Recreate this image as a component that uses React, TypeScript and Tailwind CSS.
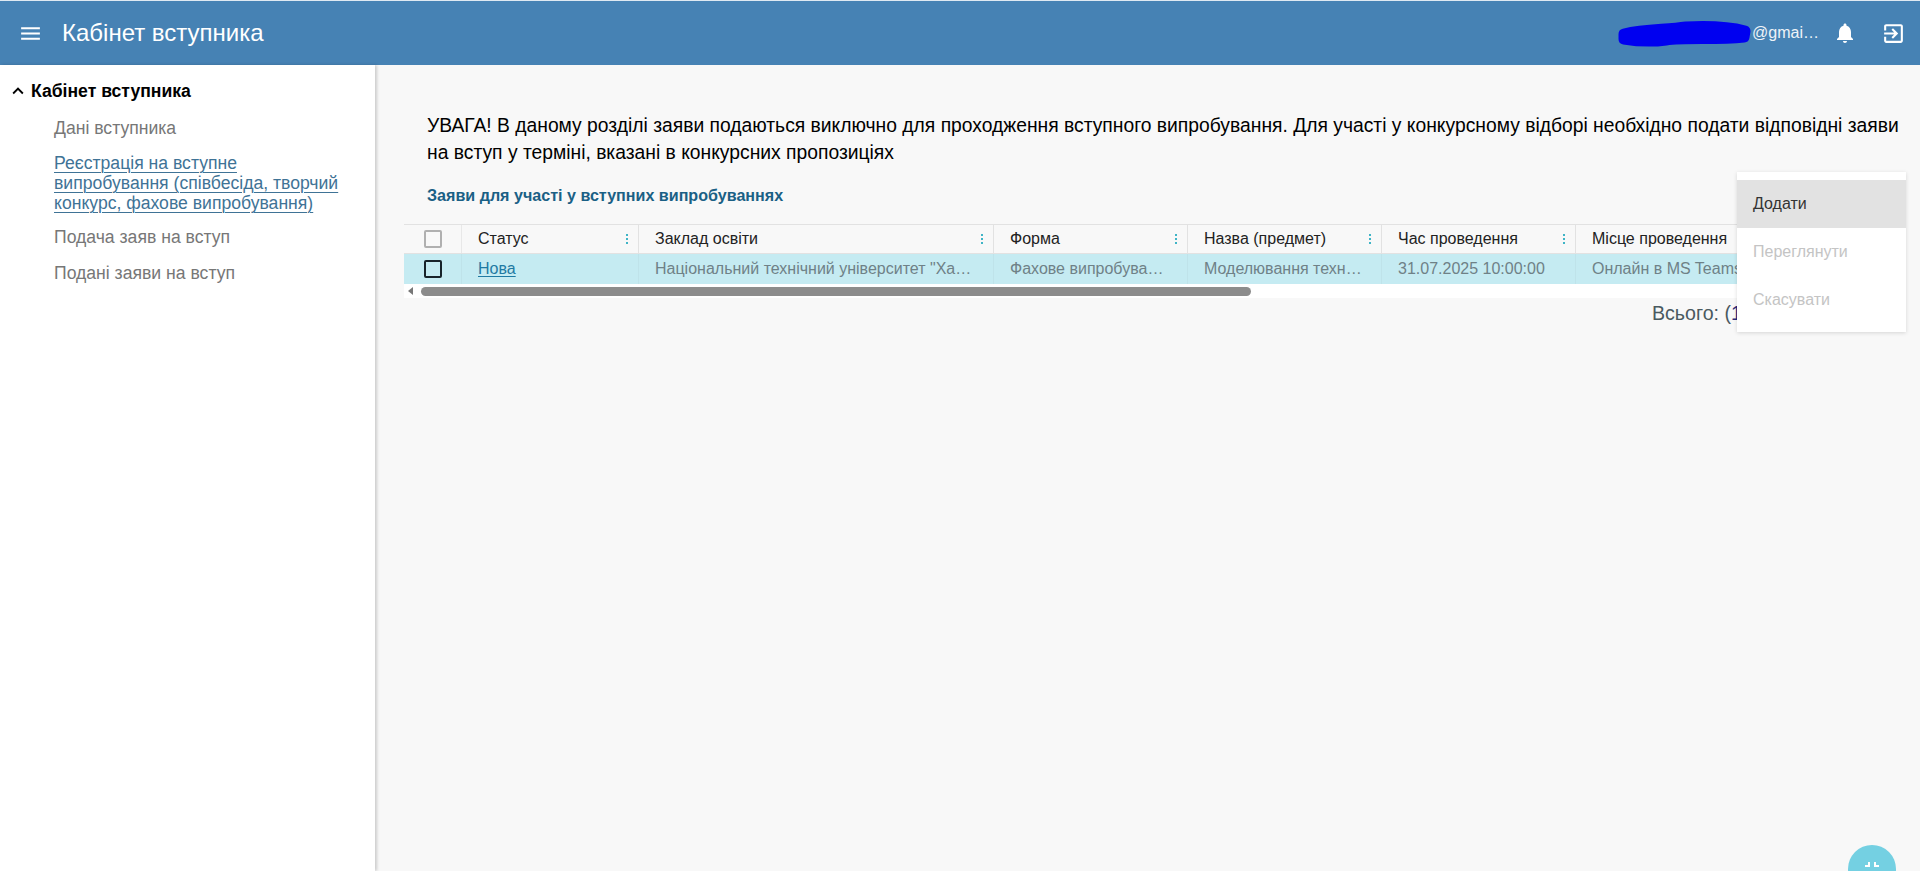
type Column = {
  title: string;
  value: string;
  width: string;
};

const columns: Column[] = [
  { title: "Заклад освіти", value: 'Національний технічний університет "Харківський політехнічний інститут"', width: "w-[355px]" },
  { title: "Форма", value: "Фахове випробування", width: "w-[194px]" },
  { title: "Назва (предмет)", value: "Моделювання технологічних процесів", width: "w-[194px]" },
  { title: "Час проведення", value: "31.07.2025 10:00:00", width: "w-[194px]" },
];

function ColumnMenuDots() {
  return (
    <div className="ml-auto mr-[10px] flex flex-col gap-[2px]">
      <span className="h-[2px] w-[2px] bg-[#3fb4c6]" />
      <span className="h-[2px] w-[2px] bg-[#3fb4c6]" />
      <span className="h-[2px] w-[2px] bg-[#3fb4c6]" />
    </div>
  );
}

export default function App() {
  return (
    <div className="relative h-[871px] w-[1920px] overflow-hidden bg-[#f8f8f8] font-['Liberation_Sans',Arial,sans-serif]">
      <div className="h-px bg-[#dfe9f2]" />
      <header className="flex h-[64px] items-center bg-[#4682b4] text-white">
        <svg className="ml-[18px] h-[25px] w-[25px]" viewBox="0 0 24 24" fill="currentColor">
          <path d="M3 18h18v-2H3v2zm0-5h18v-2H3v2zm0-7v2h18V6H3z" />
        </svg>
        <h1 className="ml-[19px] text-[24px]">Кабінет вступника</h1>
        <div className="ml-auto flex items-center">
          <div className="relative flex h-[24px] w-[202px] items-center justify-end">
            <span className="text-[16px] text-[#eef3f8]">@gmai…</span>
            <svg className="absolute left-[-1px] top-[-3px] h-[30px] w-[138px]" viewBox="0 0 138 30">
              <path
                d="M8 16 C 30 11, 50 12, 70 9 C 90 8, 110 8, 129 13 L 128 19 C 100 22, 70 19, 50 22 C 35 24, 20 23, 8 21 Z"
                fill="#0000f0"
                stroke="#0000f0"
                strokeWidth="11"
                strokeLinejoin="round"
              />
            </svg>
          </div>
          <svg className="ml-[14px] h-[24px] w-[24px]" viewBox="0 0 24 24" fill="currentColor">
            <path d="M12 22c1.1 0 2-.9 2-2h-4c0 1.1.89 2 2 2zm6-6v-5c0-3.07-1.64-5.64-4.5-6.32V4c0-.83-.67-1.5-1.5-1.5s-1.5.67-1.5 1.5v.68C7.63 5.36 6 7.92 6 11v5l-2 2v1h16v-1l-2-2z" />
          </svg>
          <svg className="ml-[24px] mr-[14px] h-[25px] w-[25px]" viewBox="0 0 24 24" fill="currentColor">
            <path d="M10.09 15.59L11.5 17l5-5-5-5-1.41 1.41L12.67 11H3v2h9.67l-2.58 2.59zM19 3H5c-1.11 0-2 .9-2 2v4h2V5h14v14H5v-4H3v4c0 1.1.89 2 2 2h14c1.1 0 2-.9 2-2V5c0-1.1-.9-2-2-2z" />
          </svg>
        </div>
      </header>

      <div className="flex h-[806px]">
        <aside className="h-full w-[375px] shrink-0 bg-white pt-[14px] shadow-[2px_0_3px_rgba(0,0,0,0.18)]">
          <div className="flex h-[24px] items-center pl-[7px] text-[17.6px] font-bold text-black">
            <svg className="mr-[2px] h-[22px] w-[22px]" viewBox="0 0 24 24" fill="black">
              <path d="M12 8l-6 6 1.41 1.41L12 10.83l4.59 4.58L18 14z" />
            </svg>
            Кабінет вступника
          </div>
          <nav className="ml-[54px] mt-[15px] w-[296px] text-[17.6px] text-[#777777]">
            <a className="block h-[20px] leading-[20px]">Дані вступника</a>
            <a className="mt-[15px] block leading-[20px] text-[#3f7396] underline decoration-1 underline-offset-[3px]">
              Реєстрація на вступне випробування (співбесіда, творчий конкурс, фахове випробування)
            </a>
            <a className="mt-[14px] block h-[20px] leading-[20px]">Подача заяв на вступ</a>
            <a className="mt-[16px] block h-[20px] leading-[20px]">Подані заяви на вступ</a>
          </nav>
        </aside>

        <main className="min-w-0 flex-1 pl-[29px] pt-[47px]">
          <p className="ml-[23px] mr-[8px] text-[19.3px] leading-[27px] text-black">
            УВАГА! В даному розділі заяви подаються виключно для проходження вступного випробування. Для участі у
            конкурсному відборі необхідно подати відповідні заяви на вступ у терміні, вказані в конкурсних пропозиціях
          </p>
          <h2 className="ml-[23px] mt-[19px] h-[20px] text-[16.1px] font-bold leading-[20px] text-[#1a6085]">
            Заяви для участі у вступних випробуваннях
          </h2>
          <div className="mt-[19px] w-[1496px] overflow-hidden text-[16px]">
            <div className="flex h-[30px] items-center border-y border-[#e2e2e2] bg-[#f8f8f8] text-[#222222]">
              <div className="flex h-full w-[58px] shrink-0 items-center justify-center border-r border-[#e8e8e8]">
                <span className="h-[18px] w-[18px] rounded-[2px] border-2 border-[#b0b0b0]" />
              </div>
              <div className="flex h-full w-[177px] shrink-0 items-center border-r border-[#e2e2e2] pl-[16px]">
                Статус
                <ColumnMenuDots />
              </div>
              {columns.map((col) => (
                <div
                  key={col.title}
                  className={`flex h-full shrink-0 items-center border-r border-[#e2e2e2] pl-[16px] ${col.width}`}
                >
                  {col.title}
                  <ColumnMenuDots />
                </div>
              ))}
              <div className="flex h-full flex-1 items-center pl-[16px]">Місце проведення</div>
            </div>
            <div className="flex h-[30px] items-center bg-[#c5ebf2] text-[#6f8187]">
              <div className="flex h-full w-[58px] shrink-0 items-center justify-center border-r border-[#bfe3ea]">
                <span className="h-[18px] w-[18px] rounded-[2px] border-2 border-[#17232a]" />
              </div>
              <div className="flex h-full w-[177px] shrink-0 items-center border-r border-[#bfe3ea] pl-[16px]">
                <a className="text-[#1f7aa3] underline underline-offset-2">Нова</a>
              </div>
              {columns.map((col) => (
                <div
                  key={col.title}
                  className={`flex h-full shrink-0 items-center border-r border-[#bfe3ea] pl-[16px] pr-[16px] ${col.width}`}
                >
                  <span className="truncate">{col.value}</span>
                </div>
              ))}
              <div className="flex h-full flex-1 items-center overflow-hidden whitespace-nowrap pl-[16px]">Онлайн в MS Teams</div>
            </div>
            <div className="flex h-[14px] items-center bg-white">
              <span className="ml-[4px] h-0 w-0 border-y-[4px] border-r-[5px] border-y-transparent border-r-[#777777]" />
              <div className="ml-[8px] h-[9px] w-[830px] rounded-full bg-[#8c8c8c]" />
            </div>
          </div>
          <div className="ml-[1248px] mt-[3px] text-[19.6px] leading-[24px] text-[#4a5a60]">
            Всього: (<span className="text-[#2b2a7a]">1</span>)
          </div>
        </main>
      </div>

      <div className="absolute left-[1737px] top-[172px] w-[169px] bg-white py-[8px] text-[16px] shadow-[0_1px_4px_rgba(0,0,0,0.14)]">
        <div className="flex h-[48px] items-center bg-[#e2e2e2] pl-[16px] text-[#333333]">Додати</div>
        <div className="flex h-[48px] items-center pl-[16px] text-[#c4c4c4]">Переглянути</div>
        <div className="flex h-[48px] items-center pl-[16px] text-[#c4c4c4]">Скасувати</div>
      </div>

      <button className="absolute left-[1848px] top-[845px] flex h-[48px] w-[48px] items-center justify-center rounded-full bg-[#74d0e2]">
        <svg className="h-[24px] w-[24px]" viewBox="0 0 24 24" fill="white">
          <path d="M5 16h3v3h2v-5H5v2zm3-8H5v2h5V5H8v3zm6 11h2v-3h3v-2h-5v5zm2-11V5h-2v5h5V8h-3z" />
        </svg>
      </button>
    </div>
  );
}
